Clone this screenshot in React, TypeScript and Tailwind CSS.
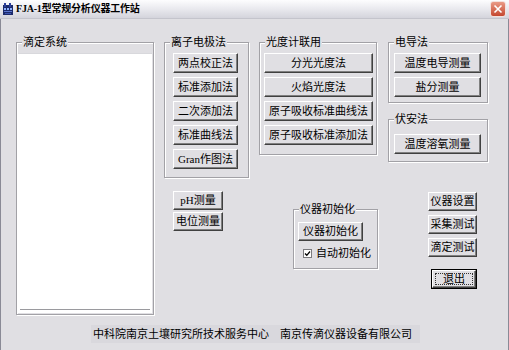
import type { ReactNode } from 'react'

const BG = 'bg-[#e0dfe3]'

function Btn({ children, className = '' }: { children: ReactNode; className?: string }) {
  return (
    <button
      className={`flex items-center justify-center border border-t-white border-l-white border-r-[#404040] border-b-[#404040] ${BG} shadow-[inset_-1px_-1px_0_#808080] text-[11px] leading-none text-black ${className}`}
    >
      {children}
    </button>
  )
}

function Group({ title, className = '', children }: { title: string; className?: string; children?: ReactNode }) {
  return (
    <div className={`flex flex-col border border-[#a2a1a6] shadow-[inset_1px_1px_0_#fff,1px_1px_0_#fff] ${className}`}>
      <span className={`-mt-[7px] ml-[5px] h-[12px] self-start ${BG} px-px text-[11px] leading-[12px]`}>{title}</span>
      {children}
    </div>
  )
}

function TitleIcon() {
  return (
    <svg width="10" height="12" viewBox="0 0 10 12" className="shrink-0">
      <rect x="0" y="2" width="10" height="10" fill="#1c2a6b" />
      <rect x="1" y="0" width="2" height="4" fill="#2b3f9a" />
      <rect x="6" y="0" width="2" height="4" fill="#2b3f9a" />
      <rect x="1" y="5" width="2" height="2" fill="#8fb2ff" />
      <rect x="4" y="5" width="2" height="2" fill="#8fb2ff" />
      <rect x="7" y="5" width="2" height="2" fill="#8fb2ff" />
      <rect x="1" y="8" width="8" height="1" fill="#5a74d0" />
      <rect x="2" y="10" width="6" height="1" fill="#3b52b0" />
    </svg>
  )
}

export default function App() {
  return (
    <div className={`flex h-[350px] w-[509px] flex-col overflow-hidden ${BG} font-[family-name:'Liberation_Serif','Noto_Sans_CJK_SC',serif] text-black`}>
      {/* title bar */}
      <div className="flex h-[19px] shrink-0 items-center border-b border-[#c4c4cc] bg-gradient-to-b from-[#fdfdfe] via-[#e9e9ee] to-[#d4d4dc] pl-[3px] pr-[3px]">
        <TitleIcon />
        <span className="ml-[3px] text-[10px] font-bold leading-none tracking-[-0.2px]">FJA-1型常规分析仪器工作站</span>
        <div className="ml-auto flex h-[16px] w-[16px] items-center justify-center rounded-[3px] border border-[#f4e0dc] bg-gradient-to-b from-[#e99a86] to-[#c4462e]">
          <svg width="10" height="10" viewBox="0 0 10 10">
            <path d="M1.5 1.5 L8.5 8.5 M8.5 1.5 L1.5 8.5" stroke="#fff" strokeWidth="1.6" />
          </svg>
        </div>
      </div>

      {/* body */}
      <div className="flex flex-1 flex-col border-l border-r border-[#8a8a96]">
        <div className="flex items-start pt-[23px]">
          <Group title="滴定系统" className="ml-[15px] h-[273px] w-[138px]">
            <div className="mx-px mb-px mt-[5px] flex flex-1 flex-col border-t border-[#d8d8dc] bg-white">
              <div className="mx-[2px] mb-[3px] mt-auto h-px bg-[#9a9a9e]" />
            </div>
          </Group>

          <div className="ml-[10px] flex flex-col">
            <div className="flex items-start">
              <Group title="离子电极法" className="h-[136px] w-[85px]">
                <div className="flex flex-col gap-[4px] pl-[8px] pt-[5px]">
                  <Btn className="h-[20px] w-[65px]">两点校正法</Btn>
                  <Btn className="h-[20px] w-[65px]">标准添加法</Btn>
                  <Btn className="h-[20px] w-[65px]">二次添加法</Btn>
                  <Btn className="h-[20px] w-[65px]">标准曲线法</Btn>
                  <Btn className="h-[20px] w-[65px]">Gran作图法</Btn>
                </div>
              </Group>

              <Group title="光度计联用" className="ml-[10px] h-[113px] w-[118px]">
                <div className="flex flex-col gap-[4px] pl-[4px] pt-[5px]">
                  <Btn className="h-[20px] w-[109px]">分光光度法</Btn>
                  <Btn className="h-[20px] w-[109px]">火焰光度法</Btn>
                  <Btn className="h-[20px] w-[109px]">原子吸收标准曲线法</Btn>
                  <Btn className="h-[20px] w-[109px]">原子吸收标准添加法</Btn>
                </div>
              </Group>

              <div className="ml-[11px] flex flex-col">
                <Group title="电导法" className="h-[61px] w-[100px]">
                  <div className="flex flex-col gap-[4px] pl-[5px] pt-[5px]">
                    <Btn className="h-[20px] w-[87px]">温度电导测量</Btn>
                    <Btn className="h-[20px] w-[87px]">盐分测量</Btn>
                  </div>
                </Group>
                <Group title="伏安法" className="mt-[16px] h-[43px] w-[100px]">
                  <div className="flex flex-col pl-[5px] pt-[9px]">
                    <Btn className="h-[20px] w-[87px]">温度溶氧测量</Btn>
                  </div>
                </Group>
              </div>
            </div>

            <div className="flex items-start">
              <div className="ml-[9px] mt-[13px] flex flex-col gap-[2px]">
                <Btn className="h-[19px] w-[50px]">pH测量</Btn>
                <Btn className="h-[19px] w-[50px]">电位测量</Btn>
              </div>

              <Group title="仪器初始化" className="ml-[70px] mt-[31px] h-[60px] w-[85px]">
                <div className="flex flex-col pl-[4px] pt-[7px]">
                  <Btn className="h-[19px] w-[65px]">仪器初始化</Btn>
                  <div className="mt-[7px] flex items-center pl-[5px]">
                    <span className="flex h-[9px] w-[9px] items-center justify-center border border-[#7a7a7e] bg-white">
                      <svg width="7" height="7" viewBox="0 0 7 7">
                        <path d="M1 3.5 L2.8 5.3 L6 1.5" stroke="#000" strokeWidth="1.3" fill="none" />
                      </svg>
                    </span>
                    <span className="ml-[4px] text-[11px] leading-none">自动初始化</span>
                  </div>
                </div>
              </Group>

              <div className="ml-[50px] mt-[14px] flex flex-col gap-[4px]">
                <Btn className="h-[19px] w-[49px]">仪器设置</Btn>
                <Btn className="h-[19px] w-[49px]">采集测试</Btn>
                <Btn className="h-[19px] w-[49px]">滴定测试</Btn>
                <div className="mt-[8px] self-end border border-black">
                  <Btn className="relative h-[18px] w-[44px]">
                    <span className="absolute inset-[2px] border border-dotted border-[#333]" />
                    退出
                  </Btn>
                </div>
              </div>
            </div>
          </div>
        </div>

        <div className="ml-[90px] mt-[10px] flex h-[18px] w-[329px] items-center bg-[#d9d8dd] pl-[2px] text-[11px] leading-none">
          中科院南京土壤研究所技术服务中心　南京传滴仪器设备有限公司
        </div>
      </div>
    </div>
  )
}
